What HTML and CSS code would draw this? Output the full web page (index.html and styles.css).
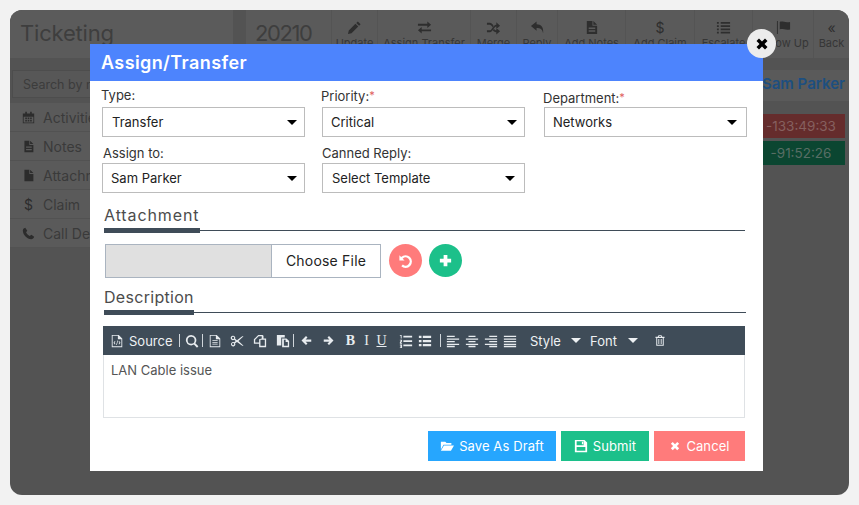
FILE: index.html
```html
<!DOCTYPE html>
<html lang="en">
<head>
<meta charset="utf-8">
<title>Assign/Transfer</title>
<link rel="stylesheet" href="styles.css">
</head>
<body>
<svg class="defs" aria-hidden="true">
  <symbol id="i-pencil" viewBox="0 0 16 16"><path d="M11.5 1.5l3 3-1.6 1.6-3-3zM9 3.9l3 3-7.2 7.2-3.8.9.9-3.9z"/></symbol>
  <symbol id="i-exchange" viewBox="0 0 16 16"><path d="M1 4h10V1.5L15 5l-4 3.5V6H1zM15 10H5V7.5L1 11l4 3.5V12h10z"/></symbol>
  <symbol id="i-random" viewBox="0 0 16 16"><path d="M1 3h3c2 0 3 1.500 4 3l-1 1.600C6 6 5 5 4 5H1zM1 11h3c2.500 0 3.500-6 7-6V2.500l4 3.500-4 3.500V7c-2.500 0-3.500 6-7 6H1zM8.500 9.500C9.300 10.300 10 11 11 11V8.500l4 3.500-4 3.500V13c-2 0-3-1-3.700-2z"/></symbol>
  <symbol id="i-reply" viewBox="0 0 16 16"><path d="M7 1.500L1 6.500l6 5V8.500c4 0 6 1 7 5.500.7-6.500-2-9.500-7-9.500z"/></symbol>
  <symbol id="i-filetext" viewBox="0 0 16 16"><path fill-rule="evenodd" d="M3 1h6v5h5v9H3zM5 8v1.500h7V8zm0 3v1.500h7V11zM10 1l4 4h-4z"/></symbol>
  <symbol id="i-file" viewBox="0 0 16 16"><path d="M3 1h6v5h5v9H3zM10 1l4 4h-4z"/></symbol>
  <symbol id="i-list" viewBox="0 0 16 16"><path d="M1 2h2v2H1zM5 2h10v2H5zM1 5.500h2v2H1zM5 5.500h10v2H5zM1 9h2v2H1zM5 9h10v2H5zM1 12.500h2v2H1zM5 12.500h10v2H5z"/></symbol>
  <symbol id="i-flag" viewBox="0 0 16 16"><path d="M1 1h1v14H1zM4 2c3-1 6 1.200 11 0v8c-5 1-8-1-11 0z"/></symbol>
  <symbol id="i-cal" viewBox="0 0 16 16"><path fill-rule="evenodd" d="M1 3h3V1h2v2h4V1h2v2h3v12H1zm1 4v7h12V7zm2 1h2v2H4zm3 0h2v2H7zm3 0h2v2h-2zm-6 3h2v2H4zm3 0h2v2H7zm3 0h2v2h-2z"/></symbol>
  <symbol id="i-phone" viewBox="0 0 16 16"><path d="M4 1l2.500 3.500L5 6.500C6 8.500 7.500 10 9.500 11l2-1.500L15 12c-.5 2-2 3-3.500 3C6 14.500 1.500 10 1 4.500 1 3 2 1.500 4 1z"/></symbol>
  <symbol id="i-x" viewBox="0 0 16 16"><path d="M2.500 5l2.500-2.500 3 3 3-3L13.500 5l-3 3 3 3-2.500 2.500-3-3-3 3L2.500 11l3-3z"/></symbol>
  <symbol id="i-plus" viewBox="0 0 16 16"><path d="M6 2h4v4h4v4h-4v4H6v-4H2V6h4z"/></symbol>
  <symbol id="i-undo" viewBox="0 0 16 16"><path d="M1.500 2.500v5.500H7L5 6a4.300 4.300 0 1 1 .2 6.300l-1.700 1.900A6.800 6.800 0 1 0 3.300 4.300z"/></symbol>
  <symbol id="i-save" viewBox="0 0 16 16"><path fill-rule="evenodd" d="M1 1h11l3 3v11H1zm2 1.500V7h8V2.500zm6 .5h1.500v3H9zM3 9v4.500h10V9z"/></symbol>
  <symbol id="i-folder" viewBox="0 0 16 16"><path d="M1 3h5l1.500 1.500H13V6.500H4L1 12zM4.500 7.500H16L12.500 13.500H1z"/></symbol>
  <symbol id="i-source" viewBox="0 0 16 16"><path fill-rule="evenodd" d="M2 1h8l4 4v10H2zm1 1v12h10V6H9V2zm2.500 6L4 10l1.500 2 .7-.5L5.200 10l1-1.500zm5 0l-.7.500 1 1.500-1 1.500.7.500L12 10zM8.500 7.500L7 12.500h.8l1.500-5z"/></symbol>
  <symbol id="i-search" viewBox="0 0 16 16"><path fill-rule="evenodd" d="M7 1a6 6 0 0 1 4.800 9.500l3.500 3.500-1.600 1.600-3.500-3.500A6 6 0 1 1 7 1zm0 2a4 4 0 1 0 0 8 4 4 0 0 0 0-8z"/></symbol>
  <symbol id="i-doc" viewBox="0 0 16 16"><path fill-rule="evenodd" d="M2 1h8l4 4v10H2zm1 1v12h10V6H9V2zm2 5h6v1H5zm0 2h6v1H5zm0 2h6v1H5z"/></symbol>
  <symbol id="i-scissors" viewBox="0 0 16 16"><path fill-rule="evenodd" d="M3.500 2a2.500 2.500 0 0 1 2.300 3.500L8 7l6-4.500h1.500L9.700 8l5.800 5.500H14L8 9l-2.200 1.500A2.500 2.500 0 1 1 4.800 9.500L6.500 8 4.800 6.500A2.500 2.500 0 1 1 3.500 2zm0 1.200a1.300 1.300 0 1 0 0 2.600 1.300 1.300 0 0 0 0-2.600zm0 7a1.300 1.300 0 1 0 0 2.600 1.300 1.300 0 0 0 0-2.600z"/></symbol>
  <symbol id="i-copy" viewBox="0 0 16 16"><path fill-rule="evenodd" d="M6 1h5l1 1v3h3v10H7v-4H1V6zm.5 1.500L2.500 6.500v3.300H7V6l3-1V2.500zM8.500 6.500v7h5v-7z"/></symbol>
  <symbol id="i-paste" viewBox="0 0 16 16"><path d="M1 1h9v3H6v9H1zM7 5h5l3 3v7H7zM9 6.500v7h4.500V9H11V6.500z"/></symbol>
  <symbol id="i-left" viewBox="0 0 16 16"><path d="M8 2l2 2-2.500 2.500H15v3H7.500L10 12l-2 2-6-6z"/></symbol>
  <symbol id="i-right" viewBox="0 0 16 16"><path d="M8 2l-2 2 2.500 2.500H1v3h7.500L6 12l2 2 6-6z"/></symbol>
  <symbol id="i-ol" viewBox="0 0 16 16"><path d="M5 2h10v2H5zM5 7h10v2H5zM5 12h10v2H5zM1 1h2v4H2V2H1zM1 6.500h2.500v2L2 10h1.500v1H1V9l1.500-1.500H1zM1 12h2.500v4H1v-1h1.500v-.500H1.500v-1h1V13H1z"/></symbol>
  <symbol id="i-ul" viewBox="0 0 16 16"><path d="M1 2h3v2.500H1zM5.500 2H15v2.500H5.500zM1 6.800h3v2.500H1zM5.500 6.800H15v2.500H5.500zM1 11.500h3V14H1zM5.500 11.500H15V14H5.500z"/></symbol>
  <symbol id="i-al" viewBox="0 0 16 16"><path d="M1 2h9v1.500H1zM1 5h14v1.500H1zM1 8h9v1.500H1zM1 11h14v1.500H1zM1 13.500h9V15H1z"/></symbol>
  <symbol id="i-ac" viewBox="0 0 16 16"><path d="M4 2h8v1.500H4zM1 5h14v1.500H1zM4 8h8v1.500H4zM1 11h14v1.500H1zM4 13.500h8V15H4z"/></symbol>
  <symbol id="i-ar" viewBox="0 0 16 16"><path d="M6 2h9v1.500H6zM1 5h14v1.500H1zM6 8h9v1.500H6zM1 11h14v1.500H1zM6 13.500h9V15H6z"/></symbol>
  <symbol id="i-aj" viewBox="0 0 16 16"><path d="M1 2h14v1.500H1zM1 5h14v1.500H1zM1 8h14v1.500H1zM1 11h14v1.500H1zM1 13.500h14V15H1z"/></symbol>
  <symbol id="i-trash" viewBox="0 0 16 16"><path fill-rule="evenodd" d="M6 1h4l1 2h3v1.500h-1V15H3V4.500H2V3h3zm.800 1L6.500 3h3l-.3-1zM4.300 4.500v9.200h7.400V4.500zM5.800 6H7v6.500H5.800zm3.200 0h1.200v6.500H9z"/></symbol>
</svg>

<div class="app">
  <aside class="side">
    <div class="side-head">Ticketing</div>
    <div class="search">Search by name</div>
    <ul class="side-list">
      <li><svg class="si"><use href="#i-cal"/></svg>Activities</li>
      <li><svg class="si"><use href="#i-filetext"/></svg>Notes</li>
      <li><svg class="si"><use href="#i-file"/></svg>Attachment</li>
      <li><span class="si-t">$</span>Claim</li>
      <li><svg class="si"><use href="#i-phone"/></svg>Call Details</li>
    </ul>
  </aside>
  <main class="main">
    <header class="bar">
      <div class="ticket">20210</div>
      <div class="tool w-update"><svg class="ti"><use href="#i-pencil"/></svg>Update</div>
      <div class="tool w-assign"><svg class="ti"><use href="#i-exchange"/></svg>Assign Transfer</div>
      <div class="tool w-merge"><svg class="ti"><use href="#i-random"/></svg>Merge</div>
      <div class="tool w-reply"><svg class="ti"><use href="#i-reply"/></svg>Reply</div>
      <div class="tool w-notes"><svg class="ti"><use href="#i-filetext"/></svg>Add Notes</div>
      <div class="tool w-claim"><span class="ti-t">$</span>Add Claim</div>
      <div class="tool w-esc"><svg class="ti"><use href="#i-list"/></svg>Escalate</div>
      <div class="tool w-follow"><svg class="ti"><use href="#i-flag"/></svg>Follow Up</div>
      <div class="tool w-back"><span class="ti-t">«</span>Back</div>
    </header>
    <div class="owner">Sam Parker</div>
    <div class="timers">
      <div class="timer red">-133:49:33</div>
      <div class="timer green">-91:52:26</div>
    </div>
  </main>
</div>

<section class="modal">
  <button class="close" aria-label="Close"><svg class="close-i"><use href="#i-x"/></svg></button>
  <h1 class="modal-title">Assign/Transfer</h1>
  <div class="modal-body">
    <form class="fields">
      <div class="field">
        <label class="lab lab-type">Type:</label>
        <div class="sel pad-10"><select><option>Transfer</option></select></div>
      </div>
      <div class="field">
        <label class="lab lab-type">Priority:<span class="req">*</span></label>
        <div class="sel pad-9"><select><option>Critical</option></select></div>
      </div>
      <div class="field">
        <label class="lab lab-dept">Department:<span class="req">*</span></label>
        <div class="sel pad-9 far"><select><option>Networks</option></select></div>
      </div>
      <div class="field">
        <label class="lab lab-assign">Assign to:</label>
        <div class="sel pad-9"><select><option>Sam Parker</option></select></div>
      </div>
      <div class="field">
        <label class="lab lab-canned">Canned Reply:</label>
        <div class="sel pad-10 far"><select><option>Select Template</option></select></div>
      </div>
    </form>

    <h2 class="sec sec-att"><span class="sec-t">Attachment</span></h2>
    <div class="file-row">
      <div class="file">
        <div class="file-name"></div>
        <div class="file-btn">Choose File</div>
      </div>
      <button class="round coral"><svg class="round-i"><use href="#i-undo"/></svg></button>
      <button class="round teal"><svg class="round-i"><use href="#i-plus"/></svg></button>
    </div>

    <h2 class="sec sec-desc"><span class="sec-t">Description</span></h2>
    <div class="editor">
      <div class="etb">
        <svg class="e"><use href="#i-source"/></svg>
        <span class="e-txt e-source">Source</span>
        <span class="sep m3"></span>
        <svg class="e m5"><use href="#i-search"/></svg>
        <span class="sep m3"></span>
        <svg class="e m5"><use href="#i-doc"/></svg>
        <svg class="e m8"><use href="#i-scissors"/></svg>
        <svg class="e m9"><use href="#i-copy"/></svg>
        <svg class="e m9"><use href="#i-paste"/></svg>
        <span class="sep m3"></span>
        <svg class="e e-s m6"><use href="#i-left"/></svg>
        <svg class="e e-s m11"><use href="#i-right"/></svg>
        <b class="e-f m10">B</b>
        <i class="e-f m5">I</i>
        <u class="e-f m4">U</u>
        <svg class="e m12"><use href="#i-ol"/></svg>
        <svg class="e m5"><use href="#i-ul"/></svg>
        <span class="sep m8"></span>
        <svg class="e m5"><use href="#i-al"/></svg>
        <svg class="e m5"><use href="#i-ac"/></svg>
        <svg class="e m5"><use href="#i-ar"/></svg>
        <svg class="e m5"><use href="#i-aj"/></svg>
        <span class="e-txt e-style m13">Style</span>
        <span class="caret m10"></span>
        <span class="e-txt e-font m9">Font</span>
        <span class="caret m10"></span>
        <svg class="e e-s m16"><use href="#i-trash"/></svg>
      </div>
      <div class="ebody">LAN Cable issue</div>
    </div>

    <div class="actions">
      <button class="act draft"><svg class="act-i"><use href="#i-folder"/></svg>Save As Draft</button>
      <button class="act submit"><svg class="act-i"><use href="#i-save"/></svg>Submit</button>
      <button class="act cancel"><svg class="act-x"><use href="#i-x"/></svg>Cancel</button>
    </div>
  </div>
</section>
</body>
</html>
```

FILE: styles.css
```css
* { box-sizing: border-box; }
html, body { margin: 0; height: 100%; }
body {
  background: #f2f2f2;
  padding: 10px;
  font-family: Inter, "Open Sans", sans-serif;
  overflow: hidden;
  position: relative;
}
.defs { display: none; }
svg { fill: currentColor; display: block; }

/* dimmed page behind the dialog */
.app {
  height: 485px;
  border-radius: 12px;
  background: #535353;
  display: flex;
  overflow: hidden;
  color: #373737;
}
.side { width: 223px; flex: none; margin-right: 13px; }
.side-head {
  height: 48px;
  background: #5b5b5b;
  font-size: 22px;
  padding: 10px 0 0 10px;
  color: #3e3e3e;
  letter-spacing: -.2px;
}
.search {
  margin: 12px 0 0 2px;
  height: 28px;
  border: 1px solid #4d4d4d;
  background: #575757;
  font-size: 12.5px;
  padding: 6px 0 0 10px;
  color: #3c3c3c;
  white-space: nowrap;
}
.side-list {
  list-style: none;
  margin: 5px 0 0;
  padding: 0;
  background: #5a5a5a;
}
.side-list li {
  height: 29px;
  display: flex;
  align-items: center;
  gap: 8px;
  padding-left: 12px;
  font-size: 14px;
  border-bottom: 1px solid #525252;
  color: #3a3a3a;
}
.si { width: 13px; height: 13px; flex: none; color: #2c2c2c; }
.si-t { width: 13px; font-size: 14px; color: #2c2c2c; text-align: center; }

.main { flex: 1; min-width: 0; }
.bar {
  height: 48px;
  background: #5a5a5a;
  display: flex;
}
.ticket {
  width: 85px;
  padding: 10px 0 0 9px;
  font-size: 22px;
  letter-spacing: -1.4px;
  color: #3e3e3e;
}
.tool {
  flex: none;
  border-left: 1px solid #545454;
  font-size: 11px;
  text-align: center;
  white-space: nowrap;
  color: #363636;
  padding-top: 10px;
  display: flex;
  flex-direction: column;
  align-items: center;
  line-height: 14px;
  gap: 1px;
}
.tool:first-of-type { border-left: 0; }
.ti { width: 15px; height: 15px; color: #2e2e2e; flex: none; }
.ti-t { height: 15px; font-size: 14px; line-height: 15px; color: #2e2e2e; }
.w-update { width: 46px; }
.w-assign { width: 93px; }
.w-merge { width: 46px; }
.w-reply { width: 41px; }
.w-notes { width: 68px; }
.w-claim { width: 69px; }
.w-esc { width: 58px; }
.w-follow { width: 61px; }
.w-back { width: 36px; }
.owner {
  margin-top: 12px;
  height: 31px;
  background: #5a5a5a;
  text-align: right;
  font-size: 15px;
  font-weight: 600;
  line-height: 27px;
  color: #1d4f80;
  padding-right: 4px;
}
.timers {
  margin-top: 13px;
  display: flex;
  flex-direction: column;
  align-items: flex-end;
  gap: 3px;
  padding-right: 4px;
}
.timer {
  width: 100px;
  height: 24px;
  font-size: 13.5px;
  line-height: 24px;
  text-align: center;
  padding-left: 12px;
}
.red { background: #652c2c; color: #86605f; }
.green { background: #0b4631; color: #586e65; }

/* dialog */
.modal {
  position: absolute;
  left: 90px;
  top: 44px;
  width: 673px;
  height: 427px;
  background: #fff;
}
.close {
  position: absolute;
  right: -13px;
  top: -15px;
  width: 29px;
  height: 29px;
  border-radius: 50%;
  border: 0;
  padding: 0;
  background: #ececec;
  color: #000;
  display: flex;
  align-items: center;
  justify-content: center;
  z-index: 2;
}
.close-i { width: 16px; height: 16px; }
.modal-title {
  margin: 0;
  height: 37px;
  background: #4d84fd;
  color: #fff;
  font-size: 18px;
  font-weight: 600;
  line-height: 38px;
  padding-left: 11px;
  letter-spacing: .4px;
}
.modal-body { padding: 0 18px 0 12px; }
.fields {
  display: grid;
  grid-template-columns: 220px 222px 203px;
  width: 645px;
}
.field { display: flex; flex-direction: column; width: 203px; }
.lab {
  display: block;
  font-size: 13px;
  line-height: 16px;
  color: #333;
}
.lab-type { height: 26px; padding-top: 6px; margin-left: -1px; }
.lab-dept { height: 26px; padding-top: 8px; margin-left: -1px; }
.lab-assign { height: 26px; padding-top: 8px; margin-left: 1px; }
.lab-canned { height: 26px; padding-top: 8px; }
.req { color: #e06060; font-size: 11px; vertical-align: 2px; }
.sel {
  position: relative;
  height: 30px;
  border: 1px solid #bcbcbc;
  background: #fff;
}
.sel select {
  appearance: none;
  border: 0;
  background: transparent;
  width: 100%;
  height: 28px;
  font: 13px Inter, sans-serif;
  color: #222;
  outline: none;
  display: block;
}
.pad-10 select { padding: 0 0 0 9px; }
.pad-9 select { padding: 0 0 0 8px; }
.sel::after {
  content: "";
  position: absolute;
  right: 7px;
  top: 12px;
  border: 5px solid transparent;
  border-top: 5px solid #000;
  border-bottom: 0;
  width: 0;
}
.far::after { right: 9px; }
.sec {
  margin: 0 0 0 2px;
  font-weight: 400;
  color: #4c4c4c;
  font-size: 16px;
  line-height: 18px;
  height: 25px;
  border-bottom: 1px solid #3f4c58;
}
.sec-t {
  display: inline-block;
  height: 27px;
  border-bottom: 5px solid #3f4c58;
}
.sec-att { margin-top: 13px; width: 641px; letter-spacing: .9px; }
.sec-att .sec-t { width: 96px; }
.sec-desc { margin-top: 10px; width: 642px; letter-spacing: .3px; }
.sec-desc .sec-t { width: 90px; }
.file-row {
  display: flex;
  margin: 13px 0 0 3px;
  align-items: flex-start;
  height: 34px;
}
.file {
  display: flex;
  width: 276px;
  height: 34px;
  border: 1px solid #aab4c0;
}
.file-name { width: 166px; background: #e0e0e0; border-right: 1px solid #aab4c0; }
.file-btn {
  flex: 1;
  font-size: 14px;
  letter-spacing: .2px;
  line-height: 32px;
  text-align: center;
  color: #222;
}
.round {
  width: 33px;
  height: 33px;
  border-radius: 50%;
  border: 0;
  padding: 0;
  color: #fff;
  display: flex;
  align-items: center;
  justify-content: center;
  margin-left: 8px;
}
.round + .round { margin-left: 7px; }
.coral { background: #ff7b7b; }
.teal { background: #1cc08a; }
.round-i { width: 15px; height: 15px; }
.editor { margin: 13px 0 0 1px; width: 642px; }
.etb {
  height: 29px;
  background: #3f4c58;
  color: #e8ecef;
  display: flex;
  align-items: center;
  padding-left: 7px;
}
.e { width: 14px; height: 14px; flex: none; }
.e-s { width: 12px; height: 13px; }
.e-txt { font-size: 13px; color: #eef1f3; white-space: nowrap; flex: none; }
.e-source { margin-left: 5px; width: 47px; }
.e-style { width: 31px; }
.e-font { width: 28px; }
.sep { width: 1px; height: 13px; background: #cfd5da; flex: none; }
.e-f {
  font: 14px/1 "Liberation Serif", serif;
  width: 11px;
  text-align: center;
  flex: none;
}
b.e-f { font-weight: 700; }
.m3 { margin-left: 3px; }
.m4 { margin-left: 4px; }
.m5 { margin-left: 5px; }
.m6 { margin-left: 6px; }
.m8 { margin-left: 8px; }
.m9 { margin-left: 9px; }
.m10 { margin-left: 10px; }
.m11 { margin-left: 11px; }
.m12 { margin-left: 12px; }
.m13 { margin-left: 13px; }
.m16 { margin-left: 16px; }
.caret {
  width: 0;
  border: 5px solid transparent;
  border-top: 5px solid #eef1f3;
  border-bottom: 0;
  flex: none;
}
.ebody {
  height: 63px;
  border: 1px solid #dfe2e5;
  border-top: 0;
  padding: 7px;
  font-size: 13px;
  line-height: 17px;
  color: #555;
}
.actions {
  margin: 13px 0 0 326px;
  display: flex;
  height: 30px;
  gap: 5px;
}
.act {
  border: 0;
  padding: 0;
  color: #fff;
  font: 13px Inter, sans-serif;
  letter-spacing: .1px;
  display: flex;
  align-items: center;
  justify-content: center;
  gap: 5px;
}
.act-i { width: 14px; height: 14px; }
.act-x { width: 12px; height: 12px; }
.draft { width: 128px; background: #26a6fe; }
.submit { width: 88px; background: #1cc08a; }
.cancel { width: 91px; background: #ff7b7b; }
```
